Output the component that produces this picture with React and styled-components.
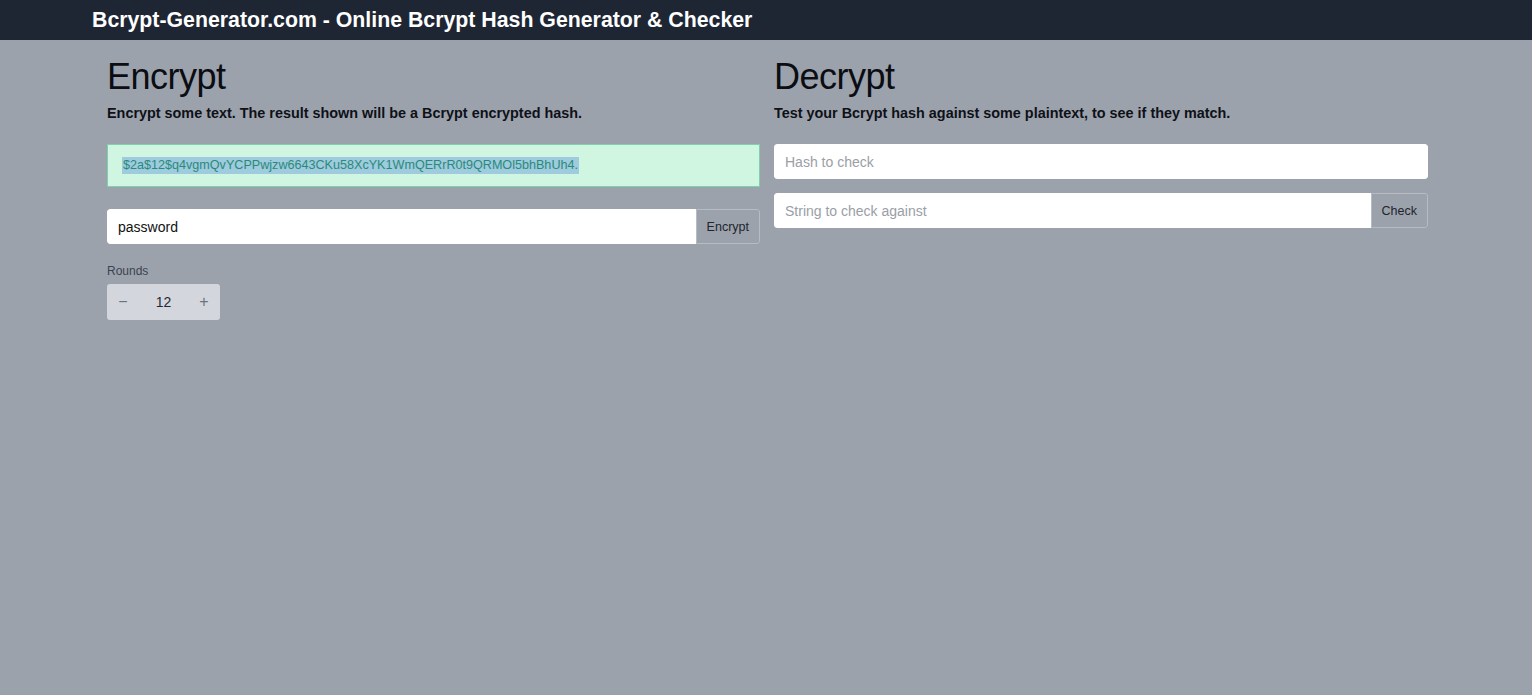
import React, { useState } from "react"
import styled, { createGlobalStyle } from "styled-components"

const GlobalStyle = createGlobalStyle`
  html, body {
    margin: 0;
    padding: 0;
    background: #9ca2ac;
    font-family: "Liberation Sans", Arial, sans-serif;
    color: #111827;
  }
  * { box-sizing: border-box; }
`

const Page = styled.div`
  min-height: 695px;
  background: #9ca2ac;
`

const Header = styled.header`
  height: 40px;
  background: #1e2634;
  display: flex;
  align-items: center;
  padding-left: 92px;
`

const Brand = styled.h1`
  margin: 0;
  color: #ffffff;
  font-size: 21.3px;
  font-weight: 700;
  letter-spacing: 0;
`

const Container = styled.main`
  width: 1321px;
  margin: 0 0 0 107px;
  padding-top: 17px;
  display: grid;
  grid-template-columns: 653px 654px;
  column-gap: 14px;
`

const Column = styled.section`
  display: flex;
  flex-direction: column;
`

const Title = styled.h2`
  margin: 0;
  font-size: 36px;
  font-weight: 400;
  line-height: 40px;
  letter-spacing: -0.5px;
  color: #0b0d12;
`

const Lead = styled.p`
  margin: 6px 0 0;
  font-size: 14.4px;
  font-weight: 700;
  line-height: 20px;
  color: #0e1117;
`

const HashBox = styled.div`
  margin-top: 21px;
  height: 43px;
  background: #d0f5e1;
  border: 1px solid #7fd1ab;
  display: flex;
  align-items: center;
  padding-left: 14px;
`

const Selected = styled.span`
  background: #9fcbdf;
  color: #2a8a78;
  font-size: 12.6px;
  line-height: 17px;
  padding: 0 1px;
`

const Group = styled.div`
  display: flex;
  height: 35px;
  margin-top: ${({ top }) => top}px;
  border-radius: 3px;
  overflow: hidden;
`

const Field = styled.input`
  flex: 1;
  min-width: 0;
  height: 100%;
  border: none;
  outline: none;
  background: #ffffff;
  padding: 0 11px;
  font-family: inherit;
  font-size: 14px;
  color: #111;
  border-radius: ${({ alone }) => (alone ? "3px" : "3px 0 0 3px")};
  &::placeholder { color: #9a9ea6; }
`

const AddonButton = styled.button`
  height: 100%;
  padding: 0 ${({ pad }) => pad}px;
  background: #9ca2ac;
  border: 1px solid #b7bcc4;
  border-radius: 0 3px 3px 0;
  font-family: inherit;
  font-size: 12.5px;
  color: #20242c;
  cursor: pointer;
`

const Label = styled.label`
  margin-top: 20px;
  font-size: 12px;
  color: #3b4250;
`

const Stepper = styled.div`
  margin-top: 6px;
  width: 113px;
  height: 36px;
  background: #d3d7dd;
  border-radius: 3px;
  display: flex;
  align-items: center;
  justify-content: space-between;
  padding: 0 10px;
`

const StepButton = styled.button`
  border: none;
  background: none;
  padding: 0;
  width: 12px;
  font-size: 16px;
  color: #6b7280;
  cursor: pointer;
`

const StepValue = styled.span`
  font-size: 14px;
  color: #1f2937;
  font-weight: 500;
`

export default function App() {
  const [rounds, setRounds] = useState(12)
  const [text, setText] = useState("password")

  return (
    <Page>
      <GlobalStyle />
      <Header>
        <Brand>Bcrypt-Generator.com - Online Bcrypt Hash Generator &amp; Checker</Brand>
      </Header>
      <Container>
        <Column>
          <Title>Encrypt</Title>
          <Lead>Encrypt some text. The result shown will be a Bcrypt encrypted hash.</Lead>
          <HashBox>
            <Selected>$2a$12$q4vgmQvYCPPwjzw6643CKu58XcYK1WmQERrR0t9QRMOl5bhBhUh4.</Selected>
          </HashBox>
          <Group top={22}>
            <Field value={text} onChange={(e) => setText(e.target.value)} />
            <AddonButton pad={10}>Encrypt</AddonButton>
          </Group>
          <Label>Rounds</Label>
          <Stepper>
            <StepButton onClick={() => setRounds(rounds - 1)}>−</StepButton>
            <StepValue>{rounds}</StepValue>
            <StepButton onClick={() => setRounds(rounds + 1)}>+</StepButton>
          </Stepper>
        </Column>
        <Column>
          <Title>Decrypt</Title>
          <Lead>Test your Bcrypt hash against some plaintext, to see if they match.</Lead>
          <Group top={21}>
            <Field alone placeholder="Hash to check" />
          </Group>
          <Group top={14}>
            <Field placeholder="String to check against" />
            <AddonButton pad={10}>Check</AddonButton>
          </Group>
        </Column>
      </Container>
    </Page>
  )
}
